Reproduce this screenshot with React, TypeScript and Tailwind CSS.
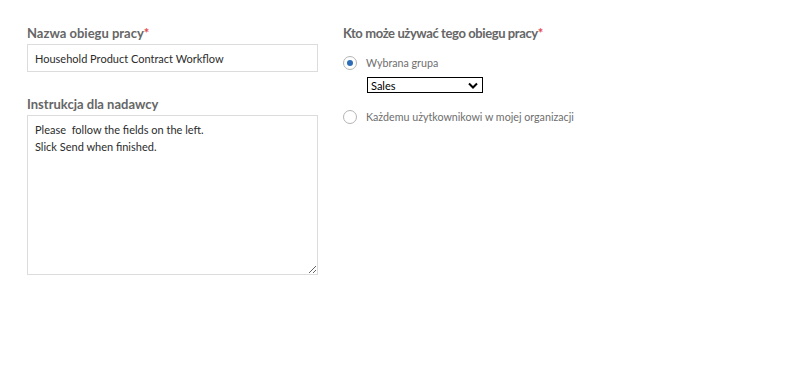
export default function App() {
  return (
    <div className="w-[795px] h-[372px] bg-white font-['Lato','Open_Sans',sans-serif] text-[#4b4b4b]">
      <div className="flex pt-[24px] pl-[27px] gap-[25px]">
        <div className="w-[291px] flex flex-col">
          <label className="text-[13px] font-bold text-[#666666] leading-[18px]">
            Nazwa obiegu pracy<span className="text-[#e34850]">*</span>
          </label>
          <input
            readOnly
            defaultValue="Household Product Contract Workflow"
            className="mt-[2px] h-[28px] w-full border border-[#dcdcdc] px-[7px] text-[11px] text-[#2c2c2c] outline-none"
          />
          <label className="mt-[23px] text-[13px] font-bold text-[#666666] leading-[18px]">
            Instrukcja dla nadawcy
          </label>
          <textarea
            readOnly
            defaultValue={"Please  follow the fields on the left.\nSlick Send when finished."}
            className="mt-[2px] h-[160px] w-full border border-[#dcdcdc] px-[7px] pt-[5px] text-[11px] leading-[17px] text-[#2c2c2c] outline-none"
          />
        </div>
        <div className="flex flex-col">
          <label className="text-[13px] font-bold text-[#666666] leading-[18px] tracking-[-0.4px]">
            Kto może używać tego obiegu pracy<span className="text-[#e34850]">*</span>
          </label>
          <div className="mt-[14px] flex items-center gap-[9px] h-[14px]">
            <span className="w-[14px] h-[14px] rounded-full border border-[#b4b4b4] flex items-center justify-center">
              <span className="w-[6px] h-[6px] rounded-full bg-[#2d6db7]" />
            </span>
            <span className="text-[10.7px] text-[#6e6e6e]">Wybrana grupa</span>
          </div>
          <div className="mt-[7px] ml-[24px] w-[116px] h-[16px] border border-black flex items-center justify-between pl-[3px] pr-[4px]">
            <span className="text-[11px] text-black leading-none">Sales</span>
            <svg width="10" height="7" viewBox="0 0 10 7">
              <path d="M1 1.5 L5 5.5 L9 1.5" fill="none" stroke="black" strokeWidth="2" />
            </svg>
          </div>
          <div className="mt-[17px] flex items-center gap-[9px] h-[14px]">
            <span className="w-[14px] h-[14px] rounded-full border border-[#b4b4b4]" />
            <span className="text-[10.7px] text-[#6e6e6e]">Każdemu użytkownikowi w mojej organizacji</span>
          </div>
        </div>
      </div>
    </div>
  );
}
